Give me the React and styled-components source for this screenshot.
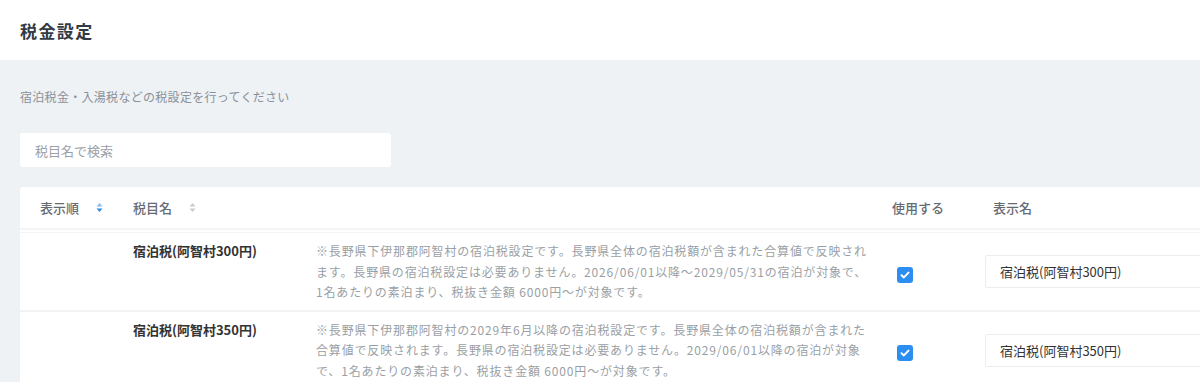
import React from 'react';
import styled, { createGlobalStyle } from 'styled-components';

const GlobalStyle = createGlobalStyle`
  html, body {
    margin: 0;
    padding: 0;
    background: #eef2f5;
    overflow: hidden;
  }
  body {
    font-family: "Noto Sans CJK JP", "Noto Sans", sans-serif;
    color: #333;
  }
`;

const Page = styled.div`
  width: 1200px;
  min-height: 382px;
  overflow: hidden;
`;

const TopBar = styled.header`
  height: 60px;
  background: #fff;
  display: flex;
  align-items: center;
  padding-left: 20px;
`;

const Title = styled.h1`
  margin: 0;
  font-size: 17px;
  letter-spacing: 1.4px;
  font-weight: 700;
  color: #333a44;
`;

const Content = styled.main`
  padding: 27px 20px 0;
`;

const Lead = styled.p`
  margin: 0;
  font-size: 12px;
  line-height: 20px;
  letter-spacing: 0.3px;
  color: #8a9099;
`;

const Search = styled.input`
  display: block;
  margin-top: 26px;
  width: 371px;
  height: 34px;
  box-sizing: border-box;
  border: none;
  border-radius: 3px;
  background: #fff;
  padding: 0 15px;
  font-family: inherit;
  font-size: 13px;
  color: #333;
  outline: none;
  &::placeholder {
    color: #9aa0a8;
  }
`;

const Card = styled.section`
  margin-top: 20px;
  width: 1240px;
  background: #fff;
  border-radius: 3px 0 0 0;
`;

const cols = '93px 183px 576px 93px 1fr';

const HeadRow = styled.div`
  display: grid;
  grid-template-columns: ${cols};
  height: 41px;
  align-items: center;
  border-bottom: 2px solid #f2f4f6;
`;

const HeadCell = styled.div`
  padding-left: ${(p) => p.$pad || 20}px;
  font-size: 13px;
  font-weight: 500;
  color: #666b73;
  display: flex;
  align-items: center;
  gap: 17px;
`;

const Body = styled.div`
  margin-top: 2px;
  border-top: 1px solid #f3f4f6;
`;

const Row = styled.div`
  display: grid;
  grid-template-columns: ${cols};
  padding: 8px 0 7px;
  border-bottom: 2px solid #f2f3f5;
`;

const Cell = styled.div`
  padding-left: 20px;
  align-self: ${(p) => p.$center ? 'center' : 'start'};
`;

const Name = styled.div`
  font-size: 13px;
  line-height: 20px;
  font-weight: 700;
  color: #333;
`;

const Note = styled.p`
  margin: 0;
  font-size: 12px;
  line-height: 20.5px;
  letter-spacing: 0.84px;
  color: #9a9fa6;
  width: 553px;
`;

const Check = styled.span`
  display: inline-flex;
  align-items: center;
  justify-content: center;
  width: 16px;
  height: 16px;
  margin: 3px 0 0 5px;
  border-radius: 3px;
  background: #2b8ef0;
`;

const NameInput = styled.input`
  display: block;
  width: 260px;
  height: 33px;
  box-sizing: border-box;
  border: 1px solid #ebedf0;
  border-radius: 2px;
  padding: 0 14px;
  font-family: inherit;
  font-size: 13px;
  color: #333;
  background: #fff;
  outline: none;
`;

const SortIcon = ({ active }) => (
  <svg width="7" height="11" viewBox="0 0 7 11">
    <path d="M3.5 1 L6.5 4.5 H0.5 Z" fill={active ? '#8cbdf0' : '#c8ccd1'} />
    <path d="M3.5 10 L6.5 6.5 H0.5 Z" fill={active ? '#2d8cf0' : '#c8ccd1'} />
  </svg>
);

const CheckMark = () => (
  <svg width="10" height="8" viewBox="0 0 10 8">
    <path d="M1.5 4.2 L3.9 6.4 L8.5 1.6" stroke="#fff" strokeWidth="2" fill="none" strokeLinecap="round" strokeLinejoin="round" />
  </svg>
);

const taxes = [
  {
    name: '宿泊税(阿智村300円)',
    note: '※長野県下伊那郡阿智村の宿泊税設定です。長野県全体の宿泊税額が含まれた合算値で反映されます。長野県の宿泊税設定は必要ありません。2026/06/01以降〜2029/05/31の宿泊が対象で、1名あたりの素泊まり、税抜き金額 6000円〜が対象です。',
  },
  {
    name: '宿泊税(阿智村350円)',
    note: '※長野県下伊那郡阿智村の2029年6月以降の宿泊税設定です。長野県全体の宿泊税額が含まれた合算値で反映されます。長野県の宿泊税設定は必要ありません。2029/06/01以降の宿泊が対象で、1名あたりの素泊まり、税抜き金額 6000円〜が対象です。',
  },
];

const App = () => {
  return (
    <Page>
      <GlobalStyle />
      <TopBar>
        <Title>税金設定</Title>
      </TopBar>
      <Content>
        <Lead>宿泊税金・入湯税などの税設定を行ってください</Lead>
        <Search placeholder="税目名で検索" />
        <Card>
          <HeadRow>
            <HeadCell>表示順<SortIcon active /></HeadCell>
            <HeadCell>税目名<SortIcon /></HeadCell>
            <HeadCell />
            <HeadCell>使用する</HeadCell>
            <HeadCell $pad={28}>表示名</HeadCell>
          </HeadRow>
          <Body>
            {taxes.map((t) => (
              <Row key={t.name}>
                <Cell />
                <Cell><Name>{t.name}</Name></Cell>
                <Cell><Note>{t.note}</Note></Cell>
                <Cell $center><Check><CheckMark /></Check></Cell>
                <Cell $center><NameInput defaultValue={t.name} /></Cell>
              </Row>
            ))}
          </Body>
        </Card>
      </Content>
    </Page>
  );
};

export default App;
